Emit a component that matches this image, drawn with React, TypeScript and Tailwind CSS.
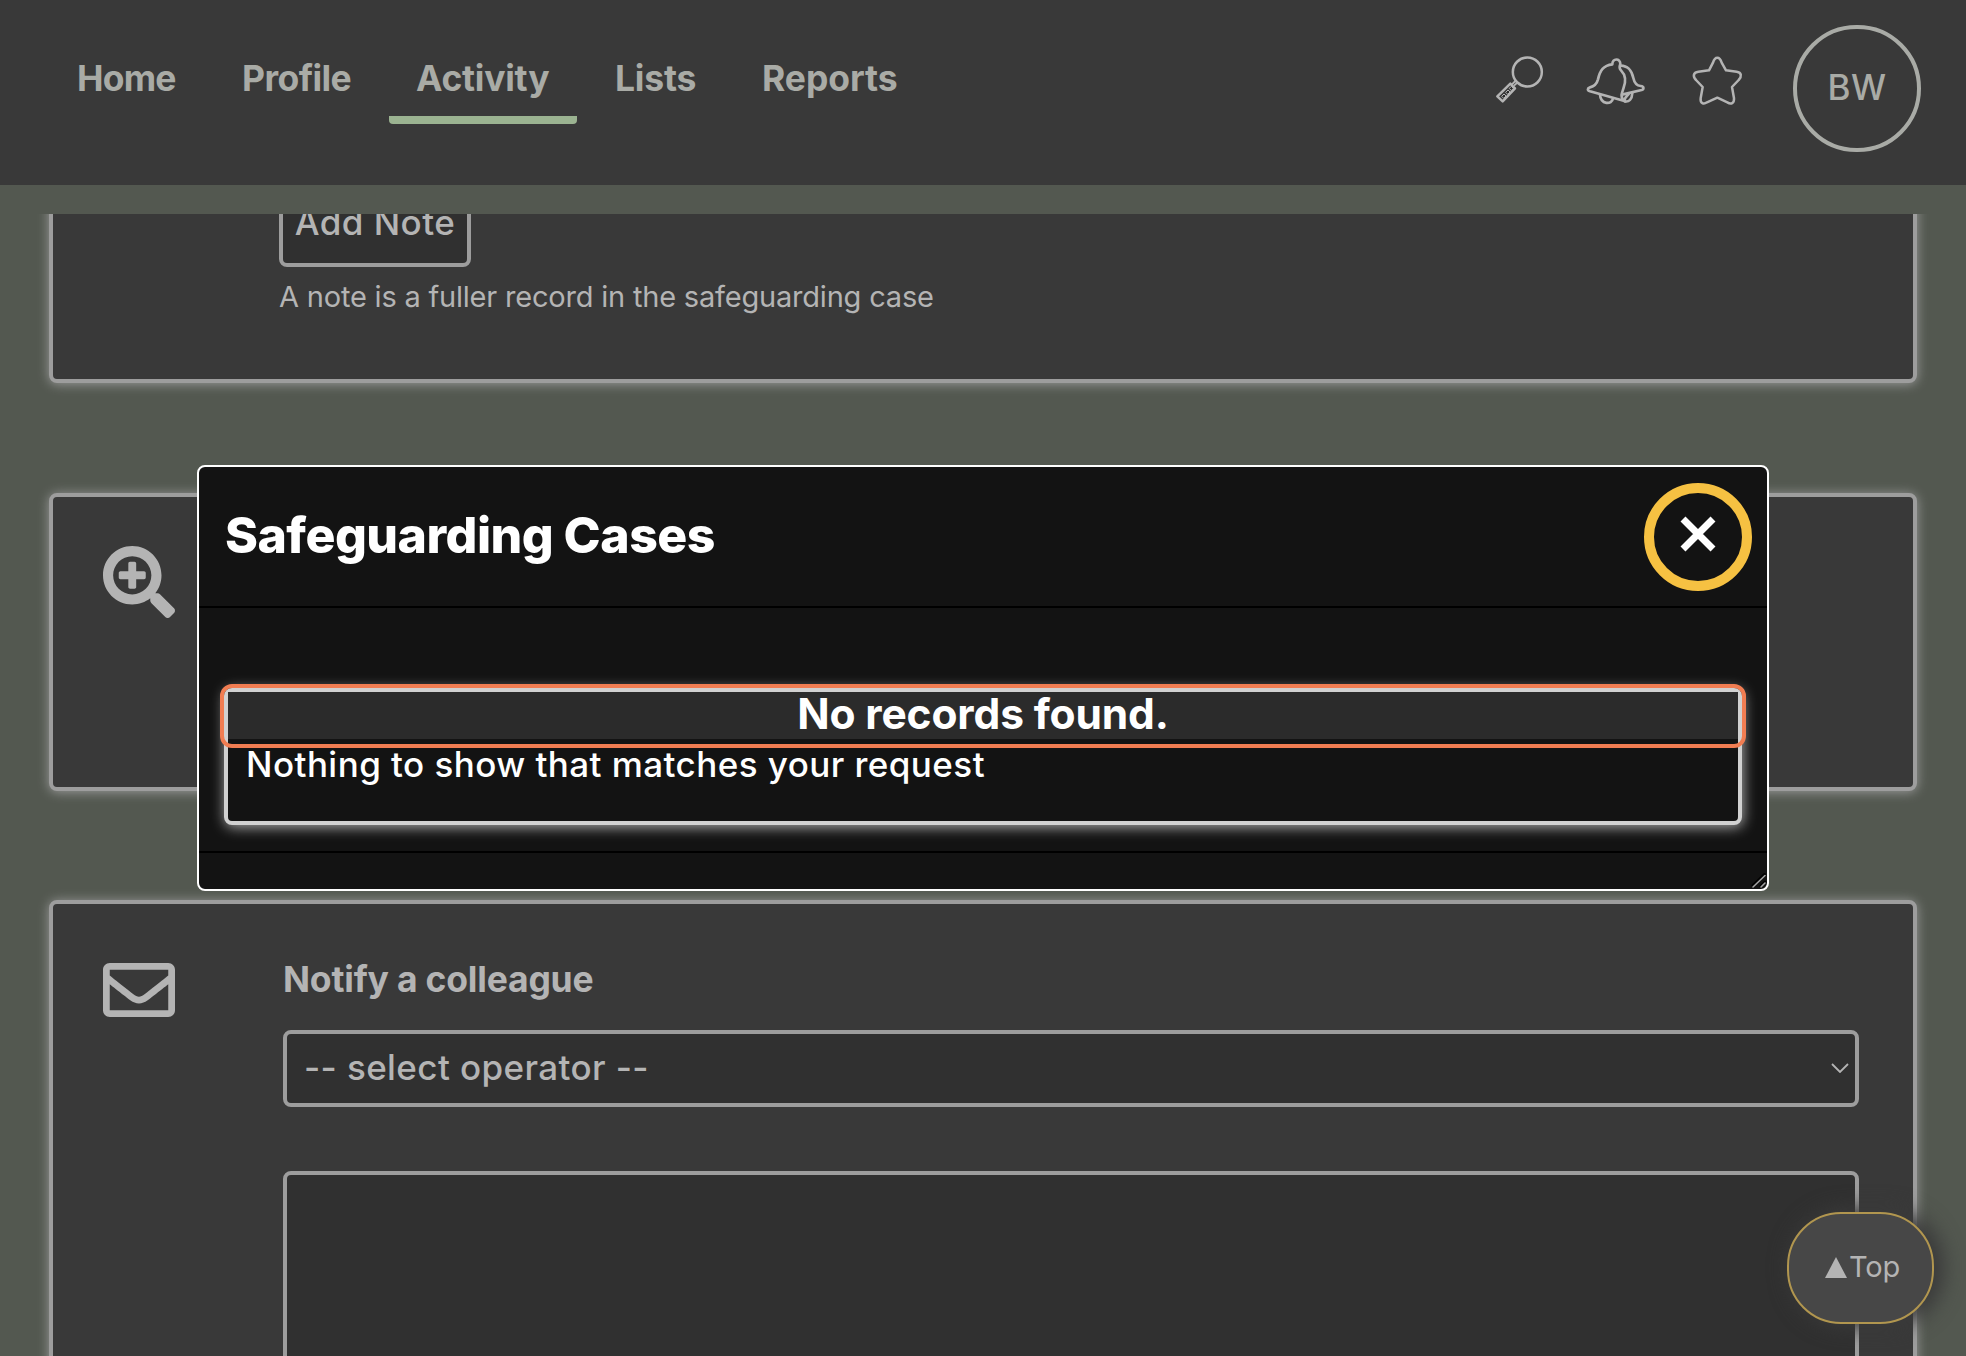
import type { ReactNode } from "react";
import { FaRegEnvelope, FaSearchPlus } from "react-icons/fa";

function NavItem({ className, active = false, children }: { className: string; active?: boolean; children: ReactNode }) {
  return (
    <a
      className={`block h-[65px] whitespace-nowrap rounded-b-[4px] border-b-8 pl-[27px] text-[35.5px] leading-[40px] font-bold text-[#a9aba6] ${
        active ? "border-[#9bb391]" : "border-transparent"
      } ${className}`}
    >
      {children}
    </a>
  );
}

function MagnifierIcon() {
  return (
    <svg className="h-[60px] w-[60px]" viewBox="0 0 180 180" fill="none" stroke="#b4b4b4" strokeWidth="7.5" strokeLinejoin="round">
      <circle cx="112" cy="66" r="43.5" />
      <path d="M83 97 L72 107 M76 93 L66 103" strokeWidth="5.5" />
      <path d="M22 139 L61 101 L75 115 L38 154 Z" />
      <path d="M35 139 l7 -7 l6 6 l-7 7 z M47 127 l7 -7 l6 6 l-7 7 z M58 115 l6 -6 l6 6 l-6 7 z" fill="#2c2c2c" strokeWidth="3" />
    </svg>
  );
}

function BellsIcon() {
  return (
    <svg className="h-[60px] w-[70px]" viewBox="0 0 210 180" fill="none" stroke="#b4b4b4" strokeWidth="8" strokeLinejoin="round" strokeLinecap="round">
      <path d="M97 43 C97 24 121 24 121 42 C117 52 118 56 123 61 C138 76 138 96 130 116 C125 130 119 145 136 154 L30 124 C21 121 22 114 30 112 C42 109 50 103 54 88 C60 62 70 46 97 43 Z" />
      <path d="M122 47 C146 48 155 62 160 84 C163 98 170 107 182 108 C193 109 192 118 185 120 L126 134" />
      <path d="M60 134 C62 165 96 165 99 145" />
      <path d="M157 129 C156 148 147 157 134 154 C132 148 136 142 146 132" />
    </svg>
  );
}

function StarIcon() {
  return (
    <svg className="h-[60px] w-[65px]" viewBox="0 0 195 180" fill="none" stroke="#b4b4b4" strokeWidth="7.5" strokeLinejoin="round">
      <path d="M84 38 C90 18 104 18 110 38 L123 61 L155 65 C170 67 171 80 161 90 L141 111 L147 145 C148 160 138 164 127 157 L97 143 L66 157 C56 164 45 160 47 145 L53 111 L33 90 C23 80 24 67 40 65 L72 61 Z" />
    </svg>
  );
}

function Card({ className, children }: { className: string; children?: ReactNode }) {
  return (
    <section className={`flex shrink-0 rounded-[8px] border-4 border-[#9d9d9d] bg-[#393939] shadow-[0_1px_12px_#9d9d9d] ${className}`}>
      {children}
    </section>
  );
}

function Header() {
  return (
    <header className="flex h-[185px] items-start bg-[#393939] pr-[45px] pl-[50px]">
      <nav className="mt-[59px] flex gap-[11px]">
        <NavItem className="w-[154px] tracking-[-0.8px]">Home</NavItem>
        <NavItem className="w-[163px] tracking-[-0.57px]">Profile</NavItem>
        <NavItem className="w-[188px] tracking-[-0.25px]" active>Activity</NavItem>
        <NavItem className="w-[136px] tracking-[-0.2px]">Lists</NavItem>
        <NavItem className="w-[188px] tracking-[-0.05px]">Reports</NavItem>
      </nav>
      <div className="mt-[50px] ml-auto flex">
        <MagnifierIcon />
        <div className="ml-[30px]"><BellsIcon /></div>
        <div className="ml-[35px]"><StarIcon /></div>
      </div>
      <div className="mt-[25px] ml-[43px] flex h-[127px] w-[128px] items-center justify-center rounded-full border-4 border-[#a9aba6] pb-[4px] text-[35px] leading-[36px] font-medium tracking-[0.4px] text-[#a9aba6]">
        BW
      </div>
    </header>
  );
}

function Dialog() {
  return (
    <div className="absolute top-[465px] left-[197px] flex h-[426px] w-[1572px] flex-col rounded-[8px] border-2 border-white bg-[#131313] text-white">
      <div className="flex h-[141px] items-center justify-between border-b-2 border-black pr-[15px] pl-[26px]">
        <h2 className="pb-[3px] text-[50px] leading-[60px] font-extrabold tracking-[-0.53px]">Safeguarding Cases</h2>
        <button className="flex h-[108px] w-[108px] items-center justify-center rounded-full border-[10px] border-[#f6c142]">
          <svg className="mb-[5px] h-[36px] w-[36px]" viewBox="0 0 36 36" stroke="#fff" strokeWidth="7">
            <path d="M3 3 L33 33 M33 3 L3 33" />
          </svg>
        </button>
      </div>
      <div className="h-[245px] border-b-2 border-black px-[25px] pt-[80px]">
        <div className="relative h-[137px] rounded-[8px] border-4 border-[#d1d1d1] bg-[#131313] shadow-[1px_2px_14px_#b0b0b0]">
          <h3 className="h-[47px] bg-[#2b2b2b] text-center text-[42.5px] leading-[44px] font-bold tracking-[-0.15px]">
            No records found.
          </h3>
          <p className="mt-[5px] pl-[18px] text-[35px] leading-[40px] font-medium tracking-[0.44px]">Nothing to show that matches your request</p>
          <div className="absolute -top-[8px] -right-[8px] -left-[8px] h-[64px] rounded-[12px] border-4 border-[#f17d52]" />
        </div>
      </div>
      <svg className="absolute right-0 bottom-0 h-[16px] w-[16px]" viewBox="0 0 16 16" fill="none" strokeLinecap="round">
        <path d="M2 12.5 L13.5 1.5 M10 13 L14 9" stroke="#000" strokeWidth="3" />
        <path d="M2 14 L14 2.5 M10 14 L14 10" stroke="#a3a3a3" strokeWidth="1.6" />
      </svg>
    </div>
  );
}

export default function App() {
  return (
    <div className="relative h-[1356px] w-full overflow-hidden bg-[#535850] font-[Inter,sans-serif] text-[#b4b4b4]">
      <Header />
      <main className="mt-[29px] flex h-[1142px] flex-col overflow-hidden pr-[49px] pl-[49px]">
        <Card className="-mt-[30px] h-[199px] flex-col pt-[3px] pl-[226px]">
          <button className="h-[76px] w-[192px] shrink-0 rounded-[8px] border-4 border-[#9d9d9d] bg-[#303030] pb-[14px] text-center text-[35px] leading-[40px] font-medium tracking-[0.45px] whitespace-nowrap">
            Add Note
          </button>
          <p className="mt-[12px] text-[29px] leading-[36px] tracking-[-0.2px]">A note is a fuller record in the safeguarding case</p>
        </Card>
        <Card className="mt-[110px] h-[298px] pt-[49px] pl-[50px]">
          <FaSearchPlus className="h-[72px] w-[72px]" />
        </Card>
        <Card className="mt-[109px] h-[500px] pl-[50px]">
          <FaRegEnvelope className="mt-[50px] h-[72px] w-[72px]" />
          <div className="ml-[108px] w-[1576px] pt-[56px]">
            <h3 className="text-[35.5px] leading-[40px] font-bold tracking-[-0.2px]">Notify a colleague</h3>
            <div className="mt-[30px] flex h-[77px] items-center justify-between rounded-[8px] border-4 border-[#9d9d9d] bg-[#303030] pr-[6px] pb-[2px] pl-[17px]">
              <span className="pb-[2px] text-[35px] leading-[40px] font-medium tracking-[0.4px]">-- select operator --</span>
              <svg className="h-[10px] w-[18px]" viewBox="0 0 18 10" fill="none" stroke="#b4b4b4" strokeWidth="1.8">
                <path d="M1 1 L9 9 L17 1" />
              </svg>
            </div>
            <div className="mt-[64px] h-[260px] rounded-[8px] border-4 border-[#9d9d9d] bg-[#303030]" />
          </div>
        </Card>
      </main>
      <Dialog />
      <button className="absolute top-[1212px] left-[1787px] flex h-[112px] w-[147px] items-center rounded-[54px] border-2 border-[#b1964f] bg-[#474747] pb-[2px] pl-[36px] text-[29px] leading-[36px] shadow-[6px_0_20px_4px_#3a3a3a]">
        <svg className="h-[21px] w-[22px]" viewBox="0 0 22 21" fill="#b4b4b4">
          <path d="M11 0 L22 21 H0 Z" />
        </svg>
        <span className="ml-[2px] tracking-[-0.17px]">Top</span>
      </button>
    </div>
  );
}
